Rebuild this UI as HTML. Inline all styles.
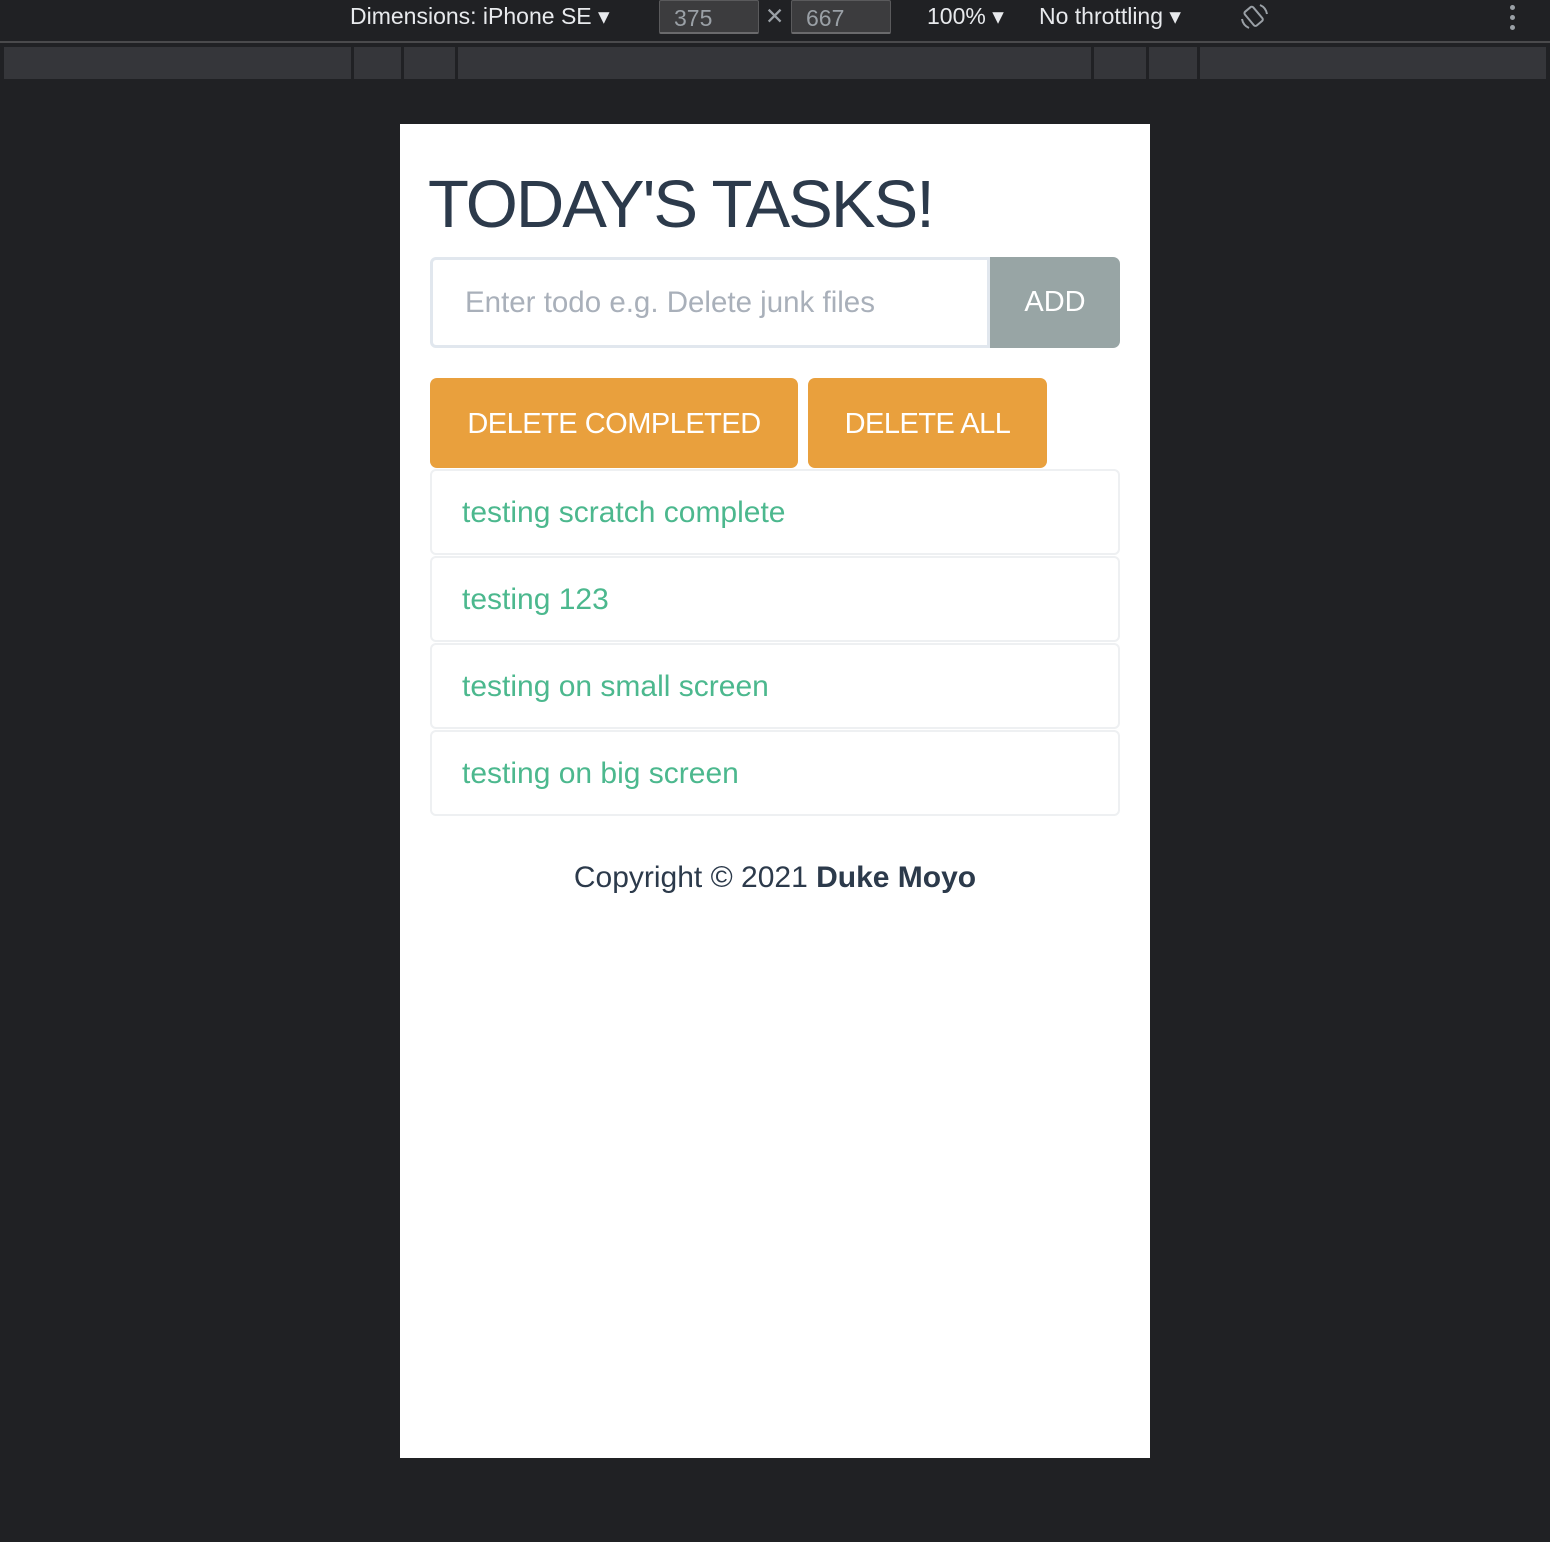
<!DOCTYPE html>
<html><head><style>
body{margin:0;width:1550px;height:1542px;background:#202124;font-family:"Liberation Sans",sans-serif;position:relative;overflow:hidden}
.a{position:absolute}
.tb{color:#e8eaed;font-size:23px;top:3px}
.inp{top:0;height:34px;background:#3c3c3e;border:1px solid #5a5a5c;border-bottom:2px solid #6a6a6c;color:#9aa0a6;font-size:23px;line-height:34px;padding-left:14px;box-sizing:border-box;border-radius:2px}
.bar{top:47px;height:32px;background:#35363a}
.page{left:400px;top:124px;width:750px;height:1334px;background:#fff}
.item{left:30px;width:690px;height:86px;border:2px solid #eef0f2;border-radius:6px;box-sizing:border-box;color:#4cb88e;font-size:30px;line-height:84px;padding-left:30px}
.btn{top:254px;height:90px;background:#e9a03d;border-radius:7px;color:#fff;font-size:29px;line-height:92px;text-align:center;letter-spacing:-0.5px}
</style></head><body>
<div class="a tb" style="left:350px">Dimensions: iPhone SE ▾</div>
<div class="a inp" style="left:659px;width:100px">375</div>
<div class="a tb" style="left:765px;color:#9aa0a6">✕</div>
<div class="a inp" style="left:791px;width:100px">667</div>
<div class="a tb" style="left:927px">100% ▾</div>
<div class="a tb" style="left:1039px">No throttling ▾</div>
<svg class="a" style="left:1240px;top:2px" width="30" height="30" viewBox="0 0 30 30" fill="none" stroke="#9aa0a6" stroke-width="2"><rect x="8" y="5" width="11" height="18" rx="2" transform="rotate(-40 14 14)"/><path d="M20 3a12 12 0 0 1 7 9M9 26a12 12 0 0 1-7-9"/></svg>
<div class="a" style="left:1510px;top:5px;width:5px"><div style="width:5px;height:5px;border-radius:50%;background:#9aa0a6;margin-bottom:5px"></div><div style="width:5px;height:5px;border-radius:50%;background:#9aa0a6;margin-bottom:5px"></div><div style="width:5px;height:5px;border-radius:50%;background:#9aa0a6"></div></div>
<div class="a" style="left:0;top:41px;width:1550px;height:2px;background:#4a4a4c"></div>
<div class="a bar" style="left:4px;width:1542px"></div>
<div class="a" style="left:351px;top:47px;width:3px;height:32px;background:#202124"></div>
<div class="a" style="left:401px;top:47px;width:3px;height:32px;background:#202124"></div>
<div class="a" style="left:455px;top:47px;width:3px;height:32px;background:#202124"></div>
<div class="a" style="left:1091px;top:47px;width:3px;height:32px;background:#202124"></div>
<div class="a" style="left:1146px;top:47px;width:3px;height:32px;background:#202124"></div>
<div class="a" style="left:1197px;top:47px;width:3px;height:32px;background:#202124"></div>
<div class="a page">
<div class="a" style="left:28px;top:42px;font-size:67px;color:#2c3a4b;letter-spacing:-2px">TODAY'S TASKS!</div>
<div class="a" style="left:30px;top:133px;width:560px;height:91px;border:3px solid #e1e7ee;border-radius:6px 0 0 6px;box-sizing:border-box;color:#a9b0ba;font-size:29.5px;line-height:85px;padding-left:32px">Enter todo e.g. Delete junk files</div>
<div class="a" style="left:590px;top:133px;width:130px;height:91px;background:#98a5a5;border-radius:0 7px 7px 0;color:#fff;font-size:29px;line-height:91px;text-align:center">ADD</div>
<div class="a btn" style="left:30px;width:368px">DELETE COMPLETED</div>
<div class="a btn" style="left:408px;width:239px">DELETE ALL</div>
<div class="a item" style="top:345px">testing scratch complete</div>
<div class="a item" style="top:432px">testing 123</div>
<div class="a item" style="top:519px">testing on small screen</div>
<div class="a item" style="top:606px">testing on big screen</div>
<div class="a" style="left:0;width:750px;top:737px;text-align:center;font-size:30px;color:#2c3a4b">Copyright © 2021 <b>Duke Moyo</b></div>
</div>
</body></html>
